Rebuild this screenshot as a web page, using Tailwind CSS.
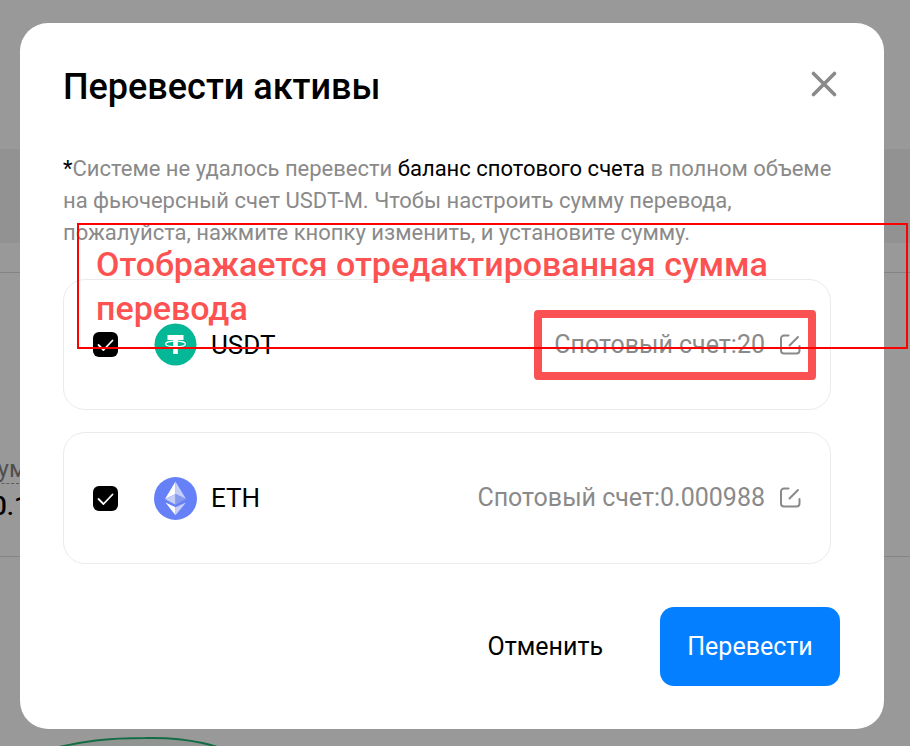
<!DOCTYPE html>
<html lang="ru">

<head>
    <meta charset="UTF-8">
    <meta name="viewport" content="width=device-width, initial-scale=1.0">
    <title>Перевести активы</title>
    <script src="https://cdn.jsdelivr.net/npm/@tailwindcss/browser@4"></script>
</head>

<body class="relative min-h-screen overflow-hidden bg-white font-['Roboto','Noto_Sans',sans-serif] text-black">
    <!-- page under the dialog -->
    <main class="absolute inset-0 flex flex-col overflow-hidden" aria-hidden="true">
        <div class="h-[149px] shrink-0"></div>
        <div class="h-[94px] shrink-0 bg-[#f3f3f3]"></div>
        <div class="h-[30px] shrink-0 border-b border-[#dcdcdc]"></div>
        <div class="flex h-[284px] shrink-0 flex-col items-start justify-end border-b border-[#dcdcdc] pb-9">
            <span class="-ml-[18px] border-b border-dashed border-[#999] text-2xl leading-7 text-[#848484]">Сумма</span>
            <span class="-ml-2 mt-2 text-[26px] leading-7 font-medium">0.1</span>
        </div>
        <svg class="mt-[179px] ml-5 h-16 w-[240px] shrink-0" viewBox="0 0 240 64" fill="#f0f8f4" stroke="#22b573" stroke-width="2">
            <path d="M0 22C60 2 100 2 125 2c40-1 75 5 115 28v60H0z" />
        </svg>
    </main>

    <div class="relative min-h-screen bg-black/40 pt-[23px] pr-[26px] pb-4 pl-5">
        <div role="dialog" aria-labelledby="title" class="relative rounded-[28px] bg-white pt-10 pr-11 pb-[43px] pl-[43px]">
            <div class="flex items-center justify-between">
                <h1 id="title" class="pt-px text-4xl leading-[46px] font-medium">Перевести активы</h1>
                <button type="button" aria-label="Закрыть" class="mr-[3px] -mt-1.5">
                    <svg class="size-[26px]" viewBox="0 0 26 26" fill="none" stroke="#8a8a8a" stroke-width="3.600" stroke-linecap="round">
                        <path d="M2.500 2.500l21 21M23.500 2.500l-21 21" />
                    </svg>
                </button>
            </div>

            <div class="mr-[9px]">
                <p class="mt-[43px] text-[22px] leading-8 whitespace-nowrap text-[#8a8a8a]">
                    <span class="text-black">*</span>Системе не удалось перевести <span class="text-black">баланс спотового счета</span> в полном объеме<br>
                    на фьючерсный счет USDT-M. Чтобы настроить сумму перевода,<br>
                    пожалуйста, нажмите кнопку изменить, и установите сумму.
                </p>

                <div class="relative mt-[30px] flex h-[131px] items-center rounded-[22px] border border-[#ebebeb] px-[29px]">
                    <label class="flex items-center">
                        <span class="relative size-[25px]">
                            <input type="checkbox" checked class="block size-full appearance-none rounded-md bg-black">
                            <svg class="absolute inset-0 size-full" viewBox="0 0 25 25" fill="none" stroke="#fff" stroke-width="1.800" stroke-linecap="round" stroke-linejoin="round">
                                <path d="M5.500 13l5 5L19.500 8.500" />
                            </svg>
                        </span>
                        <svg class="ml-9 size-[43px]" viewBox="0 0 43 43">
                            <circle cx="21.500" cy="21.500" r="21" fill="#04b796" />
                            <path fill="#fff" d="M13.500 12h16v5h-5.700v14h-4.600V17h-5.700z" />
                            <ellipse cx="21.500" cy="21" rx="10" ry="2.800" fill="none" stroke="#fff" stroke-width="1.200" />
                        </svg>
                        <span class="ml-[14px] text-[26px] leading-8">USDT</span>
                    </label>
                    <span class="ml-auto text-[25px] leading-8 text-[#8a8a8a]">Спотовый счет:20</span>
                    <button type="button" aria-label="Изменить" class="ml-[14px]">
                        <svg class="size-[22px]" viewBox="0 0 22 22" fill="none" stroke="#8a8a8a" stroke-width="2" stroke-linecap="round" stroke-linejoin="round">
                            <path d="M9.500 1.500H5a3 3 0 0 0-3 3v12a3 3 0 0 0 3 3h12.500a3 3 0 0 0 3-3V12M10.500 11.500L19 3" />
                        </svg>
                    </button>
                    <div class="absolute top-[30px] right-[14px] h-[70px] w-[282px] rounded-[4px] border-8 border-[#fa5252]"></div>
                </div>

                <div class="mt-[22px] flex h-[132px] items-center rounded-[22px] border border-[#ebebeb] px-[29px]">
                    <label class="flex items-center">
                        <span class="relative size-[25px]">
                            <input type="checkbox" checked class="block size-full appearance-none rounded-md bg-black">
                            <svg class="absolute inset-0 size-full" viewBox="0 0 25 25" fill="none" stroke="#fff" stroke-width="1.800" stroke-linecap="round" stroke-linejoin="round">
                                <path d="M5.500 13l5 5L19.500 8.500" />
                            </svg>
                        </span>
                        <svg class="ml-9 size-[43px]" viewBox="0 0 43 43">
                            <circle cx="21.500" cy="21.500" r="21.500" fill="#6680f8" />
                            <path fill="#fff" d="M21.500 4.500L11 22l10.500-5z" />
                            <path fill="#c5cef9" d="M21.500 4.500L32 22l-10.500-5z" />
                            <path fill="#c5cef9" d="M21.500 17L11 22l10.500 5.800z" />
                            <path fill="#8599ee" d="M21.500 17L32 22l-10.500 5.800z" />
                            <path fill="#fff" d="M11.500 25.500l10 4.800v8z" />
                            <path fill="#c5cef9" d="M32 25.500l-10.500 4.800v8z" />
                        </svg>
                        <span class="ml-[14px] text-[26px] leading-8">ETH</span>
                    </label>
                    <span class="ml-auto text-[25px] leading-8 text-[#8a8a8a]">Спотовый счет:0.000988</span>
                    <button type="button" aria-label="Изменить" class="ml-[14px]">
                        <svg class="size-[22px]" viewBox="0 0 22 22" fill="none" stroke="#8a8a8a" stroke-width="2" stroke-linecap="round" stroke-linejoin="round">
                            <path d="M9.500 1.500H5a3 3 0 0 0-3 3v12a3 3 0 0 0 3 3h12.500a3 3 0 0 0 3-3V12M10.500 11.500L19 3" />
                        </svg>
                    </button>
                </div>
            </div>

            <div class="mt-[43px] flex items-center justify-end gap-[57px]">
                <button type="button" class="text-[25px] leading-8">Отменить</button>
                <button type="button" class="h-[79px] w-[180px] rounded-[14px] bg-[#047fff] text-[25px] leading-8 text-white">Перевести</button>
            </div>

            <!-- callout over the first card -->
            <div class="absolute top-[200px] -right-6 left-[57px] h-[126px] border-2 border-[#ff0000] pt-[17px] pl-[17px] text-[34px] leading-11 font-medium text-[#fd5252]">
                Отображается отредактированная сумма<br>перевода
            </div>
        </div>
    </div>
</body>

</html>
